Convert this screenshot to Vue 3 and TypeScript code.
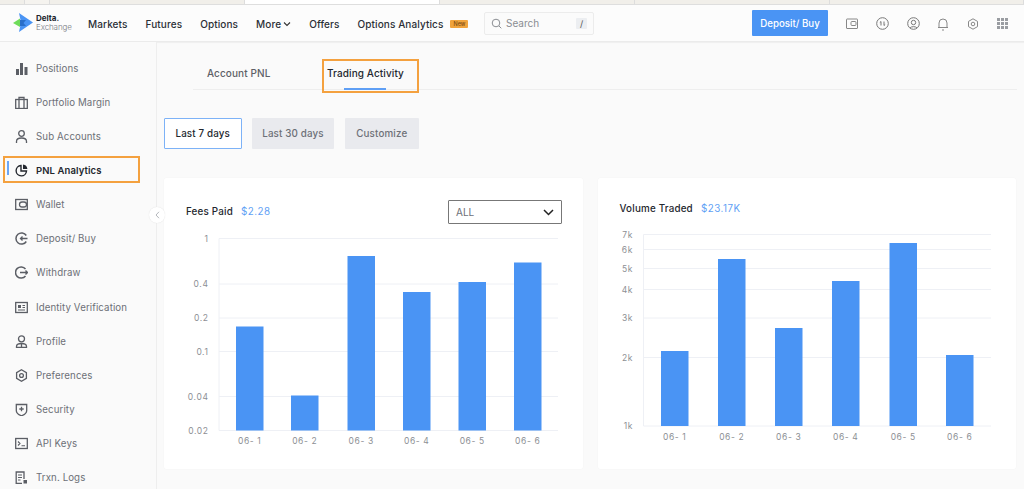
<script setup lang="ts">
interface Tick { label: string; y: number }
interface Bar { x: number; top: number; label: string }
interface Chart {
  title: string; value: string; select: boolean;
  vx: number; axis: number; right: number; base: number; labelY: number;
  ticks: Tick[]; bars: Bar[];
}
const charts: Chart[] = [
  {
    title: 'Fees Paid', value: '$2.28', select: true, vx: 164, axis: 219, right: 558, base: 430.5, labelY: 444,
    ticks: [
      { label: '1', y: 238.5 }, { label: '0.4', y: 284 }, { label: '0.2', y: 318 },
      { label: '0.1', y: 351.5 }, { label: '0.04', y: 396.5 }, { label: '0.02', y: 430.5 },
    ],
    bars: [
      { x: 236, top: 326.5, label: '06- 1' }, { x: 291, top: 395.5, label: '06- 2' },
      { x: 347.5, top: 256, label: '06- 3' }, { x: 403, top: 292, label: '06- 4' },
      { x: 458.5, top: 282, label: '06- 5' }, { x: 514, top: 262.5, label: '06- 6' },
    ],
  },
  {
    title: 'Volume Traded', value: '$23.17K', select: false, vx: 598, axis: 643.5, right: 991, base: 426, labelY: 439.5,
    ticks: [
      { label: '7k', y: 234.5 }, { label: '6k', y: 249.5 }, { label: '5k', y: 268.5 }, { label: '4k', y: 289.5 },
      { label: '3k', y: 318 }, { label: '2k', y: 357.5 }, { label: '1k', y: 426 },
    ],
    bars: [
      { x: 661, top: 351, label: '06- 1' }, { x: 718, top: 259, label: '06- 2' },
      { x: 775, top: 328, label: '06- 3' }, { x: 832, top: 281, label: '06- 4' },
      { x: 889.5, top: 243, label: '06- 5' }, { x: 946, top: 355, label: '06- 6' },
    ],
  },
];
const sideItems: string[] = [
  'Positions', 'Portfolio Margin', 'Sub Accounts', 'PNL Analytics', 'Wallet', 'Deposit/ Buy', 'Withdraw',
  'Identity Verification', 'Profile', 'Preferences', 'Security', 'API Keys', 'Trxn. Logs',
];
const dotGrid: number[][] = [[1, 1], [5, 1], [9, 1], [1, 5], [5, 5], [9, 5], [1, 9], [5, 9], [9, 9]];
</script>

<template>
  <div class="page">
    <div class="strip">
      <span class="seg" style="width:25px"></span>
      <span class="seg light" style="width:25px"></span>
      <span class="seg" style="width:195px"></span>
      <span class="seg white" style="width:195px"></span>
      <span class="seg" style="width:195px"></span>
      <span class="seg" style="width:195px"></span>
      <span class="seg" style="flex:1"></span>
    </div>

    <header class="topbar">
      <div class="logo">
        <svg width="20" height="20" viewBox="0 0 20 20" class="logo-mark">
          <path d="M6 0 L20 9.5 L6 19 L8 9.5 Z" fill="#4a94f4" />
          <path d="M0 10 L7 5.5 L7 14 Z" fill="#6fdc5a" />
          <path d="M7 7 H13 L10.5 10 L13 13 H7 Z" fill="#2a6fc9" />
        </svg>
        <div class="logo-text"><b>Delta.</b><span>Exchange</span></div>
      </div>
      <nav class="nav">
        <a>Markets</a>
        <a>Futures</a>
        <a>Options</a>
        <a class="more"><span>More</span>
          <svg width="8" height="6" viewBox="0 0 8 6"><path d="M1 1.5 L4 4.5 L7 1.5" fill="none" stroke="#333" stroke-width="1.1" /></svg>
        </a>
        <a>Offers</a>
        <a class="oa">Options Analytics<span class="new">New</span></a>
      </nav>
      <div class="search">
        <svg width="11" height="11" viewBox="0 0 11 11"><circle cx="5" cy="5" r="3.8" fill="none" stroke="#8a8d92" stroke-width="1" /><path d="M8 8 L10.3 10.3" stroke="#8a8d92" stroke-width="1" /></svg>
        <span class="ph">Search</span>
        <span class="slash">/</span>
      </div>
      <button class="deposit">Deposit/ Buy</button>
      <div class="tools">
        <svg width="12" height="11" viewBox="0 0 12 11"><rect x=".5" y="1" width="11" height="9.5" rx=".5" fill="none" stroke="#888" /><rect x="5" y="3.5" width="5" height="4" rx="1" fill="none" stroke="#888" /></svg>
        <svg width="13" height="13" viewBox="0 0 13 13"><circle cx="6.5" cy="6.5" r="5.8" fill="none" stroke="#777" /><path d="M5 4.5v4M3.8 5.6 5 4.5M8 4.5v4M8 8.5l1.2-1.1" stroke="#777" fill="none" /></svg>
        <svg width="13" height="14" viewBox="0 0 13 14"><circle cx="6.5" cy="6.5" r="5.8" fill="none" stroke="#777" /><circle cx="6.5" cy="5.5" r="2.2" fill="none" stroke="#777" /><path d="M3 11c1-1.8 6-1.8 7 0" fill="none" stroke="#777" /></svg>
        <svg width="12" height="14" viewBox="0 0 12 14"><path d="M1 10.5h10M2 10.5V6a4 4 0 0 1 8 0v4.5M5 13h2" fill="none" stroke="#888" /></svg>
        <svg width="12" height="12" viewBox="0 0 12 12"><path d="M6 .8 10.5 3.4v5.2L6 11.2 1.5 8.600V3.400Z" fill="none" stroke="#888" /><circle cx="6" cy="6" r="1.800" fill="none" stroke="#888" /></svg>
        <svg width="12" height="12" viewBox="0 0 12 12"><rect v-for="(d, i) in dotGrid" :key="i" :x="d[0] - 1" :y="d[1] - 1" width="3" height="3" fill="#9a9da2" /></svg>
      </div>
    </header>

    <div class="body">
      <aside class="side">
        <div v-for="(name, i) in sideItems" :key="name" class="item" :class="{ active: name === 'PNL Analytics' }">
          <span class="ic">
            <svg width="13" height="13" viewBox="0 0 13 13" fill="none" stroke="currentColor" stroke-width="1.300">
              <template v-if="i === 0"><path d="M1 7h3v6H1zM5 1h3v12H5zM9.500 5h3v8h-3z" fill="currentColor" stroke="none" /></template>
              <template v-else-if="i === 1"><rect x=".7" y="3.500" width="11.600" height="9" /><path d="M4 12.500V1.500h5v11" /></template>
              <template v-else-if="i === 2"><circle cx="6.500" cy="3.500" r="2.800" /><path d="M1.500 13v-1.500c0-2.500 2-3.500 5-3.500s5 1 5 3.500V13" /></template>
              <template v-else-if="i === 3"><path d="M6 1.500a5.200 5.200 0 1 0 5.500 5.500H6Z" stroke-width="1.400" /><path d="M8 .6a5 5 0 0 1 4.400 4.400H8Z" fill="currentColor" stroke="none" /></template>
              <template v-else-if="i === 4"><rect x=".7" y="1.500" width="11.600" height="10" /><rect x="4.500" y="4" width="7" height="5" rx="2.500" /></template>
              <template v-else-if="i === 5"><path d="M11.300 3.500a5.600 5.600 0 1 0 0 6" stroke-width="1.500" /><path d="M12.500 6.500H5.500M7.500 4.500l-2 2 2 2" /></template>
              <template v-else-if="i === 6"><path d="M10.500 3a5.600 5.600 0 1 0 0 7" stroke-width="1.500" /><path d="M5 6.500h7.500M10.500 4.500l2 2-2 2" /></template>
              <template v-else-if="i === 7"><rect x=".7" y="1.500" width="11.600" height="10" /><path d="M3 4h3v3H3z" fill="currentColor" stroke="none" /><path d="M7.500 4.500H10M7.500 6.500H10M3 9h7" stroke-width="1" /></template>
              <template v-else-if="i === 8"><circle cx="6.500" cy="3.800" r="3" /><path d="M1.500 12.500v-1c0-2 2-3 5-3s5 1 5 3v1Z" /><path d="M6.500 8.500v4" /></template>
              <template v-else-if="i === 9"><path d="M6.500.8l4.900 2.800v5.800l-4.900 2.800-4.900-2.800V3.600Z" /><circle cx="6.500" cy="6.500" r="1.900" /></template>
              <template v-else-if="i === 10"><path d="M1.300 1.500h10.400v6c0 2.500-3 4.500-5.200 5.300-2.200-.8-5.200-2.800-5.200-5.300Z" /><path d="M6.500 3.800v4.400M4.300 6h4.400" /></template>
              <template v-else-if="i === 11"><rect x=".7" y="1.500" width="11.600" height="10" /><path d="M3 4.500l2 2-2 2M6.500 8.800H10" stroke-width="1.100" /></template>
              <template v-else><path d="M9 8V1H1.200v11.300H7" /><path d="M3 4h4M3 6.500h4M3 9h2.500" stroke-width="1" /><rect x="8.500" y="9" width="3.500" height="3.500" fill="currentColor" stroke="none" /></template>
            </svg>
          </span>
          <span>{{ name }}</span>
        </div>
      </aside>

      <button class="collapse" aria-label="Collapse">
        <svg width="5" height="8" viewBox="0 0 5 8"><path d="M4 .8 1 4l3 3.200" fill="none" stroke="#b4b7bc" stroke-width="1" /></svg>
      </button>

      <main class="main">
        <div class="tabs">
          <div class="tab">Account PNL</div>
          <div class="tab current">Trading Activity</div>
        </div>

        <div class="ranges">
          <button class="range on">Last 7 days</button>
          <button class="range">Last 30 days</button>
          <button class="range">Customize</button>
        </div>

        <section class="charts">
          <article v-for="c in charts" :key="c.title" class="card" :class="{ plain: !c.select }">
            <div class="card-head">
              <span class="title">{{ c.title }}</span>
              <span class="val">{{ c.value }}</span>
              <div v-if="c.select" class="select">
                <span>ALL</span>
                <svg width="11" height="7" viewBox="0 0 11 7"><path d="M1 1l4.500 4.500L10 1" fill="none" stroke="#222" stroke-width="1.500" /></svg>
              </div>
            </div>
            <svg class="plot" width="419" height="244" :viewBox="`${c.vx} 225 419 244`">
              <line :x1="c.axis" :x2="c.axis" :y1="c.ticks[0].y" :y2="c.base" stroke="#eef0f5" />
              <g v-for="t in c.ticks" :key="t.label">
                <line :x1="c.axis" :x2="c.right" :y1="t.y" :y2="t.y" stroke="#eef0f5" />
                <text :x="c.axis - 10.500" :y="t.y + 3" text-anchor="end" class="tick">{{ t.label }}</text>
              </g>
              <g v-for="b in c.bars" :key="b.label">
                <rect :x="b.x" :y="b.top" width="27.500" :height="c.base - b.top" fill="#4a94f4" />
                <text :x="b.x + 13.700" :y="c.labelY" text-anchor="middle" class="tick">{{ b.label }}</text>
              </g>
            </svg>
          </article>
        </section>
      </main>
    </div>
  </div>
</template>

<style>
html, body { margin: 0; background: #fafafa; }
</style>

<style scoped>
.page {
  width: 1024px; height: 489px; overflow: hidden; background: #fafafa;
  font-family: Inter, "Liberation Sans", sans-serif; color: #2b2f36;
  display: flex; flex-direction: column;
}
.strip { height: 4px; display: flex; background: #f1efea; border-bottom: 1px solid #dedede; flex: none; }
.seg { display: block; border-right: 1px solid #ddd; box-sizing: border-box; height: 4px; }
.seg.light { background: #f5f3ef; }
.seg.white { background: #fff; }
.topbar {
  height: 36px; flex: none; display: flex; align-items: center; background: #fcfcfc;
  border-bottom: 1px solid #ebebeb; box-shadow: 0 1px 1px #f0f0f0;
}
.logo { width: 88px; display: flex; align-items: center; padding-left: 13px; box-sizing: border-box; flex: none; }
.logo-mark { flex: none; }
.logo-text { display: flex; flex-direction: column; line-height: 9px; font-size: 8px; margin-left: 3px; color: #777b82; }
.logo-text b { color: #23272e; font-weight: 700; }
.logo-text span { font-weight: 300; letter-spacing: -.1px; }
.nav { display: flex; align-items: center; gap: 18px; font-size: 10px; font-weight: 500; letter-spacing: .1px; width: 396px; flex: none; padding-top: 1px; box-sizing: border-box; }
.nav a { white-space: nowrap; }
.nav .more { display: flex; align-items: center; gap: 2px; }
.nav .oa { display: flex; align-items: center; }
.new {
  display: inline-block; width: 18px; height: 8px; line-height: 8px; margin-left: 7px; background: #f0a33c;
  color: #7a4a10; font-size: 5.500px; text-align: center; letter-spacing: 0; border-radius: 1px;
}
.search {
  width: 110px; height: 23px; box-sizing: border-box; border: 1px solid #ececec; border-radius: 2px; flex: none;
  display: flex; align-items: center; padding: 0 6px; font-size: 10px; color: #8a8d92; background: #fbfbfb;
}
.ph { margin-left: 4px; flex: 1; }
.slash { width: 11px; height: 11px; line-height: 11px; background: #eceef1; text-align: center; font-size: 9px; color: #555; border-radius: 1px; }
.deposit {
  margin-left: 158px; width: 76px; height: 26px; border: 0; border-radius: 1px; background: #4a94f4; color: #fff;
  font: 500 9.700px Inter, "Liberation Sans", sans-serif; padding: 0; flex: none;
}
.tools { flex: 1; display: flex; align-items: center; justify-content: space-between; padding: 1px 15px 0 18px; }
.body { flex: 1; display: flex; position: relative; min-height: 0; }
.side { width: 157px; flex: none; box-sizing: border-box; border-right: 1px solid #eee; padding-top: 9px; background: #fafafa; }
.item {
  height: 34.150px; display: flex; align-items: center; font-size: 9.700px; letter-spacing: .1px; color: #6d7077;
  padding-left: 15px; position: relative; white-space: nowrap;
}
.ic { width: 21px; display: flex; color: #5b5e65; flex: none; }
.item.active { color: #23272e; font-weight: 600; font-size: 9.500px; }
.item.active .ic { color: #23272e; }
.item.active::before { content: ""; position: absolute; left: 7px; top: 8px; width: 1.500px; height: 14px; background: #6da6f5; }
.item.active::after {
  content: ""; position: absolute; left: 3px; top: 3px; width: 137px; height: 27px; box-sizing: border-box;
  border: 2px solid #f4a13f;
}
.collapse {
  position: absolute; left: 149px; top: 165px; width: 16px; height: 16px; padding: 0; border: 0; border-radius: 50%;
  background: #fff; box-shadow: 0 0 1px #d8d8d8; display: flex; align-items: center; justify-content: center; z-index: 2;
}
.main { flex: 1; min-width: 0; padding: 0 8px 0 7px; box-sizing: border-box; }
.tabs { height: 48px; margin: 0 -1px 0 29px; display: flex; border-bottom: 1px solid #eeeeee; box-sizing: border-box; font-size: 10px; font-weight: 500; }
.tab { position: relative; padding: 25px 0 0 14px; color: #5d6066; letter-spacing: .1px; white-space: nowrap; width: 120px; box-sizing: border-box; line-height: 13px; }
.tab.current { color: #23272e; }
.tab.current::before { content: ""; position: absolute; left: 31px; bottom: -1px; width: 42px; height: 2px; background: #5f9ff5; }
.tab.current::after {
  content: ""; position: absolute; left: 9px; top: 17px; width: 97px; height: 34px; box-sizing: border-box;
  border: 2px solid #f4a13f;
}
.ranges { display: flex; gap: 10.500px; margin-top: 28px; }
.range {
  height: 31px; border: 0; border-radius: 1px; background: #e9eaee; color: #6d7077; padding: 0; width: 82px;
  font: 500 9.800px Inter, "Liberation Sans", sans-serif; letter-spacing: .15px;
}
.range:nth-child(3) { width: 74.500px; }
.range.on { width: 77.500px; background: #fff; color: #23272e; border: 1px solid #7db2f7; box-sizing: border-box; }
.charts { display: flex; gap: 15px; margin-top: 29px; }
.card { background: #fff; height: 291px; width: 419px; flex: none; border-radius: 2px; box-shadow: 0 0 1px #ececec; }
.card.plain { width: 418px; }
.card-head {
  height: 47px; box-sizing: border-box; padding: 21px 21px 0 22px; display: flex; align-items: center; font-size: 9.800px;
}
.card-head > .title, .card-head > .val { height: 24px; line-height: 24px; }
.plain .card-head { padding-top: 19px; padding-left: 21.500px; align-items: flex-start; }
.title { font-weight: 500; letter-spacing: .2px; color: #23272e; }
.val { margin-left: 8px; color: #5f9ff5; letter-spacing: .5px; }
.select {
  margin-left: auto; width: 114px; height: 24px; box-sizing: border-box; border: 1px solid #777; border-radius: 1px;
  display: flex; align-items: center; justify-content: space-between; padding: 0 7px; color: #6d7077; font-size: 10px;
}
.plot { display: block; }
.tick { font-size: 8.500px; fill: #8d8f94; letter-spacing: .6px; font-family: Inter, "Liberation Sans", sans-serif; }
</style>
